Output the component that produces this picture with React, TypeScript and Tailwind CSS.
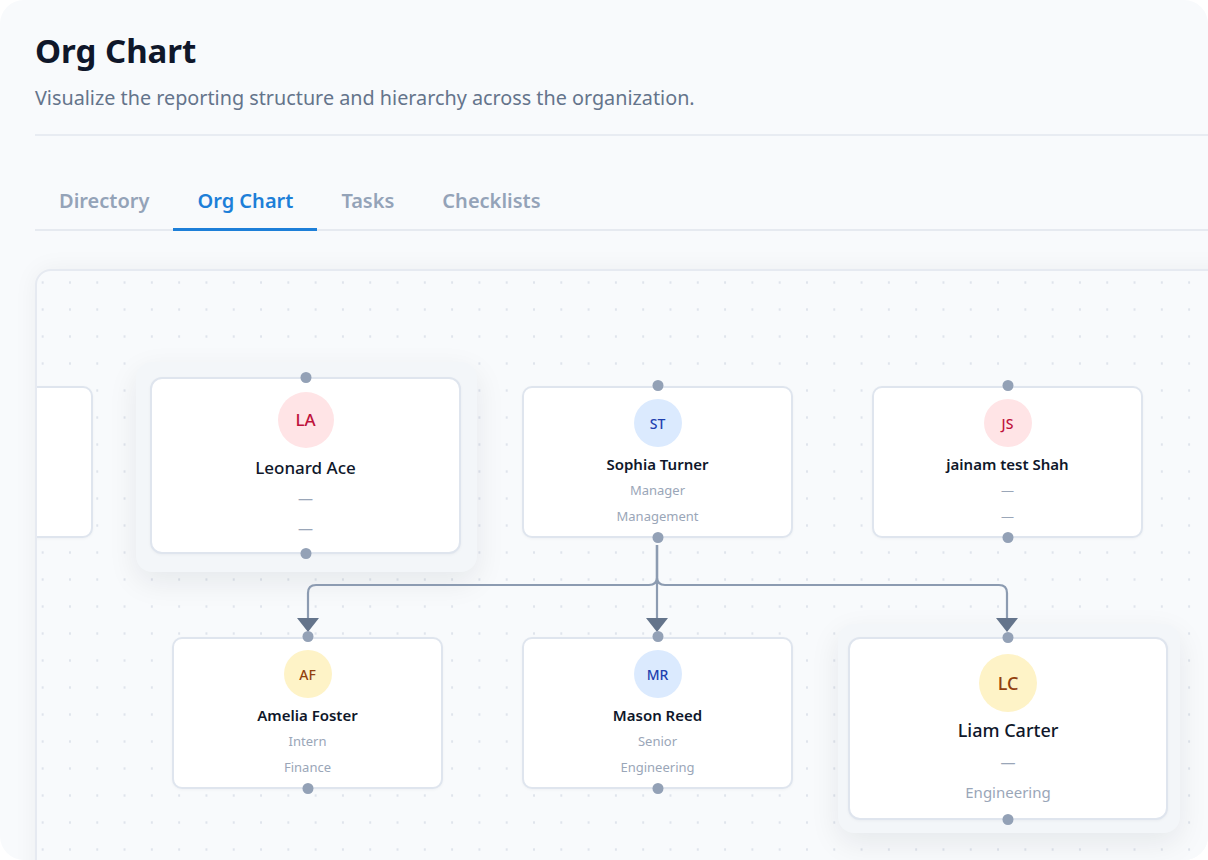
import React from 'react';

type Tone = 'rose' | 'blue' | 'amber';

interface OrgNode {
  id: string;
  initials: string;
  name: string;
  role: string;
  dept: string;
  tone: Tone;
  x: number;
  y: number;
  size: 'md' | 'lg' | 'xl';
  offscreen?: boolean;
}

const TONES: Record<Tone, string> = {
  rose: 'bg-[#ffe4e6] text-[#be123c]',
  blue: 'bg-[#dbeafe] text-[#1e40af]',
  amber: 'bg-[#fef3c7] text-[#92400e]',
};

const SIZES = {
  md: {
    card: 'w-[271px] h-[152px] pt-[11px] rounded-[10px]',
    avatar: 'w-[48px] h-[48px] text-[14px]',
    name: 'mt-[7px] text-[15px] leading-[20px] font-semibold',
    sub: 'text-[13px] leading-[26px]',
    gap: 'mt-[3px]',
    topHandle: 'top-[-8px]',
    bottomHandle: 'bottom-[-7px]',
  },
  lg: {
    card: 'w-[311px] h-[177px] pt-[13px] rounded-[12px]',
    avatar: 'w-[56px] h-[56px] text-[17px]',
    name: 'mt-[8px] text-[17px] leading-[24px] font-medium',
    sub: 'text-[15px] leading-[30px]',
    gap: 'mt-[3px]',
    topHandle: 'top-[-7px]',
    bottomHandle: 'bottom-[-7px]',
  },
  xl: {
    card: 'w-[320px] h-[183px] pt-[15px] rounded-[12px]',
    avatar: 'w-[58px] h-[58px] text-[18px]',
    name: 'mt-[6px] text-[18px] leading-[24px] font-medium',
    sub: 'text-[15px] leading-[30px]',
    gap: 'mt-[5px]',
    topHandle: 'top-[-7px]',
    bottomHandle: 'bottom-[-7px]',
  },
};

// screen coordinates of each card's top-left corner
const NODES: OrgNode[] = [
  { id: 'nb', initials: '', name: '', role: '', dept: '', tone: 'blue', x: -178, y: 386, size: 'md', offscreen: true },
  { id: 'la', initials: 'LA', name: 'Leonard Ace', role: '—', dept: '—', tone: 'rose', x: 150, y: 377, size: 'lg' },
  { id: 'st', initials: 'ST', name: 'Sophia Turner', role: 'Manager', dept: 'Management', tone: 'blue', x: 522, y: 386, size: 'md' },
  { id: 'js', initials: 'JS', name: 'jainam test Shah', role: '—', dept: '—', tone: 'rose', x: 872, y: 386, size: 'md' },
  { id: 'af', initials: 'AF', name: 'Amelia Foster', role: 'Intern', dept: 'Finance', tone: 'amber', x: 172, y: 637, size: 'md' },
  { id: 'mr', initials: 'MR', name: 'Mason Reed', role: 'Senior', dept: 'Engineering', tone: 'blue', x: 522, y: 637, size: 'md' },
  { id: 'lc', initials: 'LC', name: 'Liam Carter', role: '—', dept: 'Engineering', tone: 'amber', x: 848, y: 637, size: 'xl' },
];

const HALOS = [
  { id: 'la', x: 136, y: 362, w: 341, h: 210 },
  { id: 'lc', x: 838, y: 624, w: 342, h: 209 },
];

const TABS = ['Directory', 'Org Chart', 'Tasks', 'Checklists'];

const NodeCard: React.FC<{ node: OrgNode }> = ({ node }) => {
  const s = SIZES[node.size];
  return (
    <div
      className={`absolute flex flex-col items-center bg-white border-2 border-[#dfe5ee] shadow-[0_1px_3px_rgba(15,23,42,0.04)] ${s.card}`}
      style={{ left: node.x, top: node.y }}
    >
      {!node.offscreen && (
        <>
          <span className={`absolute left-1/2 -translate-x-1/2 w-[11px] h-[11px] rounded-full bg-[#93a1b6] ${s.topHandle}`} />
          <div className={`flex items-center justify-center rounded-full font-medium ${s.avatar} ${TONES[node.tone]}`}>
            {node.initials}
          </div>
          <div className={`text-[#0f172a] ${s.name}`}>{node.name}</div>
          <div className={`text-[#9aa6b8] ${s.sub} ${s.gap}`}>{node.role}</div>
          <div className={`text-[#9aa6b8] ${s.sub}`}>{node.dept}</div>
          <span className={`absolute left-1/2 -translate-x-1/2 w-[11px] h-[11px] rounded-full bg-[#93a1b6] ${s.bottomHandle}`} />
        </>
      )}
    </div>
  );
};

const Edges: React.FC = () => (
  <svg className="absolute left-0 top-0" width={1208} height={860}>
    <g fill="none" stroke="#8c9bb1" strokeWidth={2.2}>
      <path d="M657 545 L657 577 Q657 585 649 585 L316 585 Q308 585 308 593 L308 620" />
      <path d="M657 545 L657 620" />
      <path d="M657 545 L657 577 Q657 585 665 585 L999 585 Q1007 585 1007 593 L1007 620" />
    </g>
    <g fill="#64748b">
      <polygon points="297,618 319,618 308,632" />
      <polygon points="646,618 668,618 657,632" />
      <polygon points="996,618 1018,618 1007,632" />
    </g>
  </svg>
);

export default function App() {
  return (
    <div className="min-h-screen bg-white font-['Noto_Sans',sans-serif]">
      <div className="w-[1208px] h-[860px] rounded-[24px] bg-[#f8fafc] overflow-hidden pl-[35px] pt-[31px]">
        <h1 className="text-[33px] leading-[40px] font-bold text-[#0f172a]">Org Chart</h1>
        <p className="mt-[13px] text-[19.8px] leading-[28px] text-[#64748b]">
          Visualize the reporting structure and hierarchy across the organization.
        </p>
        <div className="mt-[22px] h-[2px] bg-[#e8ecf2]" />

        <div className="mt-[41px] flex border-b-2 border-[#e6eaf0]">
          {TABS.map(tab => {
            const active = tab === 'Org Chart';
            return (
              <button
                key={tab}
                className={`-mb-[2px] px-6 pt-[10px] pb-[13px] border-b-[3px] text-[20px] leading-[28px] font-semibold ${
                  active ? 'border-[#1d7fd8] text-[#1d7fd8]' : 'border-transparent text-[#94a3b8]'
                }`}
              >
                {tab}
              </button>
            );
          })}
        </div>

        <div className="relative mt-[38px] w-[1220px] h-[640px] rounded-[16px] border-2 border-[#e6eaf1] bg-[#f8fafc] bg-[radial-gradient(circle,#dfe4ec_1px,transparent_1.4px)] bg-[size:27.3px_27px] bg-[position:-8px_-2px] overflow-hidden shadow-[0_0_24px_rgba(15,23,42,0.05)]">
          {/* viewport in page coordinates */}
          <div className="absolute left-[-37px] top-[-271px] w-[1208px] h-[860px]">
            {HALOS.map(h => (
              <div
                key={h.id}
                className="absolute rounded-[16px] bg-[#f3f6f9] shadow-[0_10px_30px_rgba(15,23,42,0.08)]"
                style={{ left: h.x, top: h.y, width: h.w, height: h.h }}
              />
            ))}
            <Edges />
            {NODES.map(n => (
              <NodeCard key={n.id} node={n} />
            ))}
          </div>
        </div>
      </div>
    </div>
  );
}
